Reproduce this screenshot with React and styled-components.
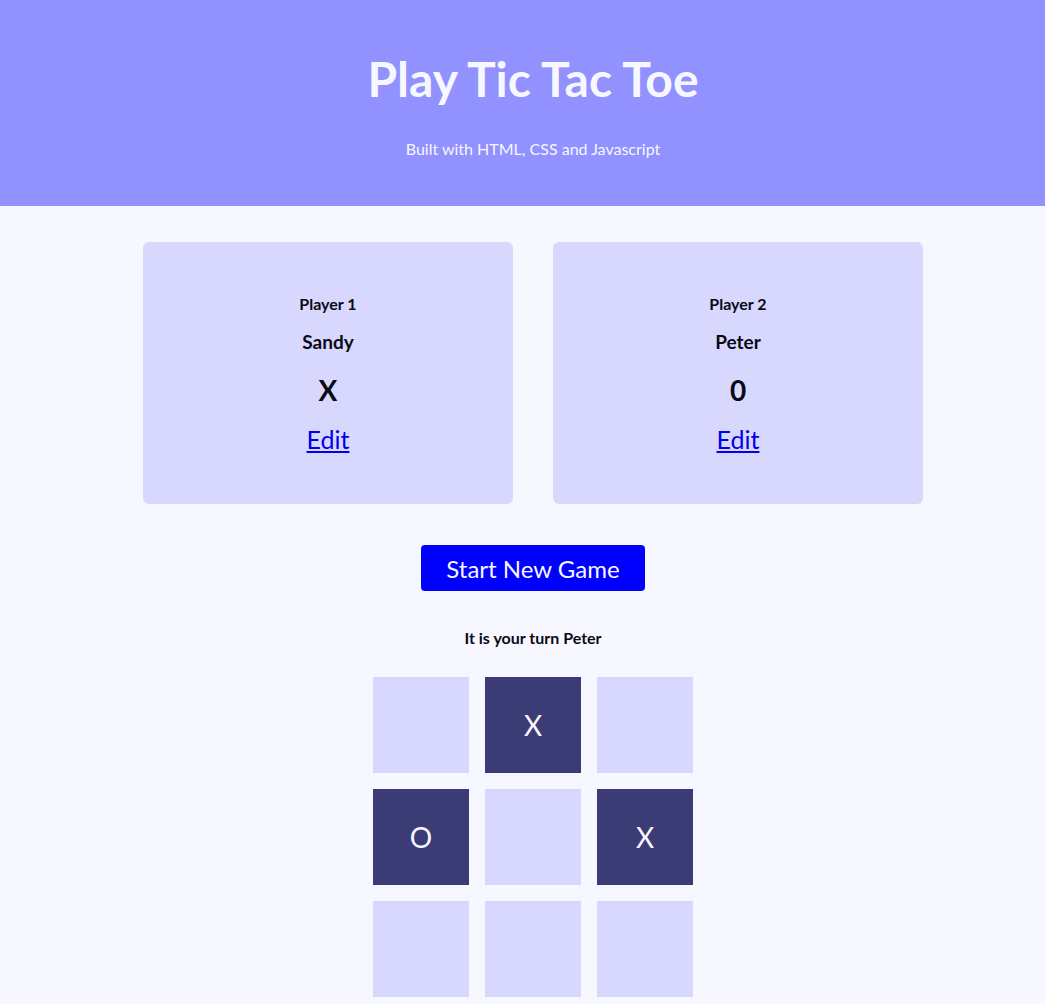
import React from "react";
import styled, { createGlobalStyle } from "styled-components";

const Global = createGlobalStyle`
  * { box-sizing: border-box; }
  html, body { margin: 0; padding: 0; }
  body {
    background: #f7f7ff;
    font-family: Lato, "Open Sans", sans-serif;
    color: #0a0a14;
  }
`;

const Header = styled.header`
  background: #9191ff;
  height: 206px;
  padding: 47px 0 0 21px;
  text-align: center;
  color: #f7f7ff;
`;

const Title = styled.h1`
  margin: 0;
  font-size: 48px;
  line-height: 64px;
  font-weight: 700;
`;

const Subtitle = styled.p`
  margin: 28px 0 0;
  font-size: 16px;
  line-height: 20px;
`;

const Main = styled.main`
  padding: 36px 0 0 21px;
  display: flex;
  flex-direction: column;
  align-items: center;
`;

const Players = styled.section`
  display: flex;
  gap: 40px;
`;

const Card = styled.article`
  width: 370px;
  height: 262px;
  background: #d8d8ff;
  border-radius: 6px;
  padding-top: 52px;
  display: flex;
  flex-direction: column;
  align-items: center;
  text-align: center;
`;

const Label = styled.h2`
  margin: 0;
  font-size: 16px;
  line-height: 20px;
  font-weight: 700;
`;

const Name = styled.h3`
  margin: 16px 0 0;
  font-size: 19px;
  line-height: 24px;
  font-weight: 700;
`;

const Symbol = styled.p`
  margin: 20px 0 0;
  font-size: 28px;
  line-height: 32px;
  font-weight: 700;
`;

const EditLink = styled.a`
  margin-top: 18px;
  font-size: 25px;
  line-height: 30px;
  color: #0000ee;
  text-decoration: underline;
  cursor: pointer;
`;

const StartButton = styled.button`
  margin-top: 41px;
  width: 224px;
  height: 46px;
  border: none;
  border-radius: 4px;
  background: #0000ff;
  color: #f7f7ff;
  font-family: Lato, "Open Sans", sans-serif;
  font-size: 24px;
  cursor: pointer;
`;

const Turn = styled.p`
  margin: 37px 0 0;
  font-size: 16px;
  line-height: 20px;
  font-weight: 700;
`;

const Board = styled.ol`
  list-style: none;
  margin: 29px 0 0;
  padding: 0;
  display: grid;
  grid-template-columns: repeat(3, 96px);
  grid-auto-rows: 96px;
  gap: 16px;
`;

const Cell = styled.li`
  background: ${(p) => (p.$filled ? "#3b3b75" : "#d8d8ff")};
  color: #f7f7ff;
  font-size: 28px;
  display: flex;
  align-items: center;
  justify-content: center;
  cursor: pointer;
`;

const players = [
  { label: "Player 1", name: "Sandy", symbol: "X" },
  { label: "Player 2", name: "Peter", symbol: "0" },
];

const cells = ["", "X", "", "O", "", "X", "", "", ""];

export default function App() {
  return (
    <>
      <Global />
      <Header>
        <Title>Play Tic Tac Toe</Title>
        <Subtitle>Built with HTML, CSS and Javascript</Subtitle>
      </Header>
      <Main>
        <Players>
          {players.map((p) => (
            <Card key={p.label}>
              <Label>{p.label}</Label>
              <Name>{p.name}</Name>
              <Symbol>{p.symbol}</Symbol>
              <EditLink>Edit</EditLink>
            </Card>
          ))}
        </Players>
        <StartButton>Start New Game</StartButton>
        <Turn>It is your turn Peter</Turn>
        <Board>
          {cells.map((c, i) => (
            <Cell key={i} $filled={!!c}>
              {c}
            </Cell>
          ))}
        </Board>
      </Main>
    </>
  );
}
